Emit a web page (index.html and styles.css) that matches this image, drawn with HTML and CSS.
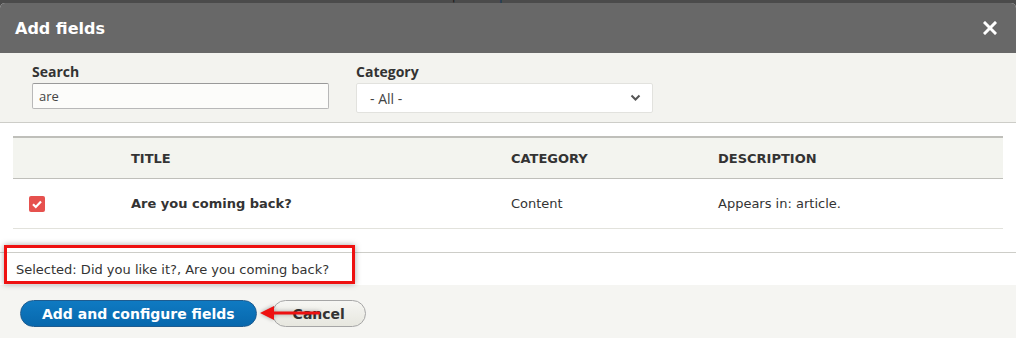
FILE: index.html
```html
<!DOCTYPE html>
<html lang="en">
<head>
  <meta charset="UTF-8">
  <title>Add fields</title>
  <link rel="stylesheet" href="styles.css">
</head>
<body>
  <div class="behind">
    <div class="behind-text">Access: <a>Permission</a> &nbsp;|&nbsp; <a>View published content</a></div>
  </div>

  <div class="dialog">
    <div class="dialog-titlebar">
      <span class="dialog-title">Add fields</span>
      <button class="dialog-close" title="Close">
        <svg width="14" height="14" viewBox="0 0 14 14"><path d="M2 2 L12 12 M12 2 L2 12" stroke="#fff" stroke-width="3" stroke-linecap="square"/></svg>
      </button>
    </div>

    <div class="filters">
      <div class="filter filter-search">
        <label for="search">Search</label>
        <input type="text" id="search" value="are">
      </div>
      <div class="filter filter-category">
        <label for="category">Category</label>
        <div class="select">
          <span>- All -</span>
          <svg width="11" height="8" viewBox="0 0 11 8"><path d="M1.5 1.5 L5.5 5.5 L9.5 1.5" fill="none" stroke="#555" stroke-width="2"/></svg>
        </div>
      </div>
    </div>

    <table class="fields">
      <colgroup>
        <col style="width:102px"><col style="width:380px"><col style="width:207px"><col>
      </colgroup>
      <thead>
        <tr><th></th><th>Title</th><th>Category</th><th>Description</th></tr>
      </thead>
      <tbody>
        <tr>
          <td><span class="check"><svg width="16" height="16" viewBox="0 0 16 16"><path d="M4 8.2 L6.8 11 L12 5.5" fill="none" stroke="#fff" stroke-width="2.2"/></svg></span></td>
          <td class="field-title">Are you coming back?</td>
          <td>Content</td>
          <td>Appears in: article.</td>
        </tr>
      </tbody>
    </table>

    <div class="selected">Selected: Did you like it?, Are you coming back?</div>

    <div class="button-pane">
      <button class="btn btn-primary">Add and configure fields</button>
      <button class="btn">Cancel</button>
    </div>

    <div class="note-box"></div>
    <svg class="note-arrow" width="66" height="18" viewBox="0 0 66 18">
      <path d="M14 9 L62 9" stroke="#ee1111" stroke-width="3"/>
      <path d="M2 9 L16 2 L16 16 Z" fill="#ee1111"/>
    </svg>
  </div>
</body>
</html>
```

FILE: styles.css
```css
body { margin: 0; background: #4b4b4b; font-family: "DejaVu Sans", sans-serif; color: #333; overflow: hidden; }

.behind { height: 3px; overflow: hidden; }
.behind-text { margin: -11px 0 0 320px; font-size: 13px; line-height: 14px; color: #1e1e1e; white-space: nowrap; }
.behind-text a { color: #173a5a; }

.dialog { position: relative; background: #fff; border-radius: 5px 5px 0 0; overflow: hidden; }

.dialog-titlebar { height: 50px; background: #686868; display: flex; align-items: center; justify-content: space-between; padding: 0 19px 0 15px; }
.dialog-title { color: #fff; font-weight: bold; font-size: 16px; }
.dialog-close { background: none; border: 0; padding: 0; display: flex; }

.filters { background: #f3f3ef; border-bottom: 1px solid #cdcdc8; padding: 10px 32px 9px; display: flex; gap: 27px; align-items: flex-start; }
.filter label { display: block; font-family: "Open Sans", sans-serif; font-weight: bold; font-size: 14px; line-height: 18px; margin-bottom: 2px; color: #333; }
.filter input { box-sizing: border-box; width: 297px; height: 26px; margin: 0; padding: 0 6px; font-family: "Open Sans", sans-serif; font-size: 13px; color: #444; background: #fcfcfa; border: 1px solid #b8b8b8; border-top-color: #999; border-radius: 2px; }
.select { box-sizing: border-box; width: 297px; height: 30px; background: #fff; border: 1px solid #e2e2de; border-radius: 2px; display: flex; align-items: center; justify-content: space-between; padding: 0 11px 0 13px; font-family: "Open Sans", sans-serif; font-size: 14px; color: #444; }

.fields { width: 990px; margin: 13px 13px 23px; border-collapse: collapse; table-layout: fixed; font-size: 13px; }
.fields th { background: #f3f4ef; border-top: 2px solid #bfbfba; border-bottom: 1px solid #bfbfba; height: 40px; padding: 0 16px; text-align: left; text-transform: uppercase; font-weight: bold; color: #333; }
.fields td { height: 49px; padding: 0 16px; border-bottom: 1px solid #e2e2dc; color: #333; }
.fields .field-title { font-weight: bold; }
.check { display: block; width: 16px; height: 16px; border-radius: 2px; background: #e6514e; }
.check svg { display: block; }

.selected { border-top: 1px solid #cdcdc8; height: 32px; display: flex; align-items: center; padding: 0 16px; font-size: 13px; color: #333; }

.button-pane { background: #f5f5f2; padding: 15px 20px 20px; display: flex; gap: 15px; }
.btn { height: 27px; padding: 0 20px; border-radius: 20px; font-family: "DejaVu Sans", sans-serif; font-weight: bold; font-size: 14px; color: #333; border: 1px solid #a6a6a6; background: linear-gradient(to bottom, #f6f6f3, #e7e7df); }
.btn-primary { padding: 0 21px; color: #fff; background: linear-gradient(to bottom, #0f7ac2, #0868ad); border-color: #1e5c90; }

.note-box { position: absolute; left: 4px; top: 242px; width: 345px; height: 33px; border: 3px solid #ee1111; box-shadow: 0 0 6px rgba(0,0,0,0.35); }
.note-arrow { position: absolute; left: 258px; top: 301px; filter: drop-shadow(0 0 2px rgba(0,0,0,0.35)); }
```
